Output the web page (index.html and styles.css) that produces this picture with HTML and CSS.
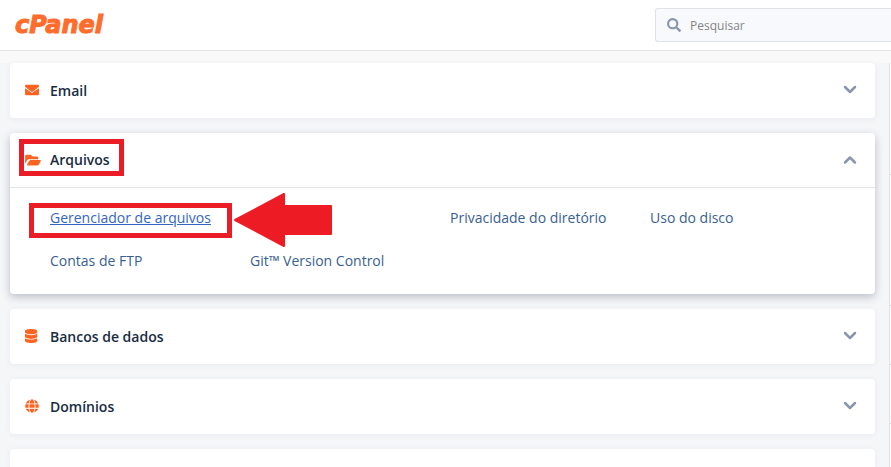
FILE: index.html
```html
<!DOCTYPE html>
<html lang="pt-BR">
<head>
    <meta charset="UTF-8">
    <meta name="viewport" content="width=device-width, initial-scale=1.0">
    <title>cPanel</title>
    <link rel="stylesheet" href="styles.css">
</head>
<body>
    <!--top bar with logo and search-->
    <header class="top-bar">
        <a class="logo" href="#">cPanel</a>
        <div class="search">
            <svg class="search-icon" viewBox="0 0 512 512" aria-hidden="true"><path d="M505 443 405 343c-4-4-10-7-17-7h-16a207 207 0 1 0-36 36v16c0 7 3 13 7 17l100 100c9 9 24 9 34 0l28-28c9-10 9-25 0-34zM208 336a128 128 0 1 1 0-256 128 128 0 0 1 0 256z"/></svg>
            <input type="text" class="search-input" placeholder="Pesquisar" aria-label="Pesquisar">
        </div>
    </header>

    <div class="page">
        <!--feature groups-->
        <main class="groups">
            <section class="card">
                <button class="card-header" aria-expanded="false">
                    <svg class="card-icon" viewBox="0 0 512 512" aria-hidden="true"><path d="M502 191c4-3 10 0 10 5v204c0 27-21 48-48 48H48c-27 0-48-21-48-48V196c0-5 6-8 10-5 22 17 52 40 154 114 21 15 57 48 92 47 35 1 72-32 92-47 102-74 132-97 154-114zM256 320c23 0 56-29 73-41 133-96 143-105 174-129 6-4 9-11 9-19v-19c0-27-21-48-48-48H48c-27 0-48 21-48 48v19c0 8 3 15 9 19 31 24 41 33 174 129 17 12 50 41 73 41z"/></svg>
                    <span class="card-title">Email</span>
                    <svg class="chevron" viewBox="0 0 28 28" aria-hidden="true"><path d="M4 8 14 18 24 8"/></svg>
                </button>
            </section>

            <section class="card card-open">
                <button class="card-header" aria-expanded="true">
                    <svg class="card-icon folder-icon" viewBox="0 0 576 512" aria-hidden="true"><path d="m573 295-72 123c-13 22-42 38-68 38H92c-18 0-29-20-20-36l72-124c13-22 42-40 68-40h341c18 0 29 24 20 39zM152 224h328v-48c0-27-22-48-48-48H272l-64-64H48c-26 0-48 22-48 48v278l69-118c17-30 49-48 83-48z"/></svg>
                    <span class="card-title">Arquivos</span>
                    <svg class="chevron" viewBox="0 0 28 28" aria-hidden="true"><path d="M4 19 14 9 24 19"/></svg>
                    <span class="highlight highlight-title"></span>
                </button>
                <div class="card-body">
                    <a class="feature active" href="#">Gerenciador de arquivos</a>
                    <a class="feature third-column" href="#">Privacidade do diretório</a>
                    <a class="feature" href="#">Uso do disco</a>
                    <a class="feature first-column" href="#">Contas de FTP</a>
                    <a class="feature" href="#">Git™ Version Control</a>
                    <span class="highlight highlight-link"></span>
                    <svg class="arrow" viewBox="0 0 98 54" aria-hidden="true"><path d="M1 27 50 1V13H97V41H50V53Z"/></svg>
                </div>
            </section>

            <section class="card">
                <button class="card-header" aria-expanded="false">
                    <svg class="card-icon" viewBox="0 0 512 512" aria-hidden="true"><path d="M448 73v46c0 40-100 73-224 73S0 159 0 119V73C0 33 100 0 224 0s224 33 224 73zM448 176v103c0 40-100 73-224 73S0 319 0 279V176c48 33 136 48 224 48s176-15 224-48zM448 336v103c0 40-100 73-224 73S0 479 0 439V336c48 33 136 48 224 48s176-15 224-48z"/></svg>
                    <span class="card-title">Bancos de dados</span>
                    <svg class="chevron" viewBox="0 0 28 28" aria-hidden="true"><path d="M4 8 14 18 24 8"/></svg>
                </button>
            </section>

            <section class="card">
                <button class="card-header" aria-expanded="false">
                    <svg class="card-icon" viewBox="0 0 496 512" aria-hidden="true"><path d="M336 160C322 71 288 8 248 8s-74 63-88 152h176zM152 256c0 22 1 44 3 64h186c2-20 3-42 3-64s-1-44-3-64H155c-2 20-3 42-3 64zm325-96A248 248 0 0 0 316 18c25 34 42 85 51 142h110zM180 18A248 248 0 0 0 19 160h110c9-57 26-108 51-142zm307 174H373a710 710 0 0 1 0 128h114a248 248 0 0 0 0-128zM120 256c0-22 1-43 3-64H9a248 248 0 0 0 0 128h114c-2-21-3-42-3-64zm40 96c14 89 48 152 88 152s74-63 88-152H160zm156 142a248 248 0 0 0 161-142H367c-9 57-26 108-51 142zM19 352a248 248 0 0 0 161 142c-25-34-42-85-51-142H19z"/></svg>
                    <span class="card-title">Domínios</span>
                    <svg class="chevron" viewBox="0 0 28 28" aria-hidden="true"><path d="M4 8 14 18 24 8"/></svg>
                </button>
            </section>

            <section class="card card-next"></section>
        </main>

        <!--edge of the information panel-->
        <aside class="side-panel">
            <div class="side-row side-heading"></div>
            <div class="side-row side-tall"></div>
            <div class="side-row"></div>
            <div class="side-row"></div>
        </aside>
    </div>

    <script>
        //toggle a group when its header is clicked
        document.querySelectorAll('.card-header').forEach(header => {
            header.addEventListener('click', () => {
                const body = header.nextElementSibling;
                if (!body) return;
                body.hidden = !body.hidden;
                header.setAttribute('aria-expanded', String(!body.hidden));
            });
        });
    </script>
</body>
</html>
```
FILE: styles.css
```css
/*base*/
* {
    box-sizing: border-box;
}

body {
    margin: 0;
    height: 100vh;
    display: flex;
    flex-direction: column;
    overflow: hidden;
    background-color: #f5f6f8;
    font-family: "Open Sans", "Noto Sans", sans-serif;
    font-size: 14px;
    color: #182c42;
}

/*top bar*/
.top-bar {
    flex: none;
    display: flex;
    align-items: center;
    justify-content: space-between;
    height: 51px;
    padding-left: 15px;
    background-color: #fff;
    border-bottom: 1px solid #e4e5e7;
}

.logo {
    font-family: "DejaVu Sans", sans-serif;
    font-size: 24px;
    font-weight: bold;
    font-style: oblique;
    line-height: 32px;
    color: #ff6c2c;
    -webkit-text-stroke: 1px #ff6c2c;
    text-decoration: none;
}

.search {
    display: flex;
    align-items: center;
    width: 236px;
    height: 34px;
    padding-left: 11px;
    gap: 9px;
    background-color: #f7f9fc;
    border: 1px solid #dfe3e8;
    border-right: none;
    border-radius: 3px 0 0 3px;
}

.search-icon {
    flex: none;
    width: 14px;
    height: 14px;
    fill: #8a96ad;
}

.search-input {
    flex: 1;
    min-width: 0;
    padding: 0;
    border: none;
    outline: none;
    background: transparent;
    font-family: inherit;
    font-size: 12px;
    color: #333;
}

.search-input::placeholder {
    color: #858585;
}

/*page layout*/
.page {
    flex: 1;
    display: flex;
    gap: 14px;
    padding-left: 10px;
    min-height: 0;
    border-top: 12px solid #f9f9fa;
}

.groups {
    flex: 1;
    display: flex;
    flex-direction: column;
    gap: 15px;
}

/*group cards*/
.card {
    flex: none;
    background-color: #fff;
    border-radius: 4px;
    box-shadow: 0 1px 6px rgba(40, 50, 80, 0.06);
}

.card-open {
    box-shadow: 0 3px 8px rgba(40, 45, 75, 0.28);
}

.card-next {
    flex: 1;
    border-radius: 4px 4px 0 0;
}

.card-header {
    position: relative;
    display: flex;
    align-items: center;
    width: 100%;
    height: 55px;
    padding: 0 18px 1px 15px;
    border: none;
    background: none;
    font: inherit;
    color: inherit;
    text-align: left;
    cursor: pointer;
}

.card-open .card-header {
    border-bottom: 1px solid #e3e5e8;
}

.card-icon {
    flex: none;
    width: 14px;
    height: 14px;
    margin-right: 11px;
    fill: #ff6321;
}

.folder-icon {
    width: 16px;
    margin-right: 9px;
}

.card-title {
    flex: 1;
    font-weight: 600;
}

.chevron {
    width: 14px;
    height: 14px;
    fill: none;
    stroke: #8b95ab;
    stroke-width: 5;
    stroke-linecap: round;
    stroke-linejoin: round;
}

/*feature links*/
.card-body {
    position: relative;
    display: grid;
    grid-template-columns: repeat(auto-fill, 200px);
    row-gap: 23px;
    padding: 20px 0 23px 40px;
}

.card-body[hidden] {
    display: none;
}

.feature {
    line-height: 20px;
    color: #3a5f92;
    text-decoration: none;
}

.feature:hover,
.feature.active {
    color: #3465c4;
    text-decoration: underline;
}

.first-column {
    grid-column: 1;
}

.third-column {
    grid-column: 3;
}

/*red marks over the card*/
.highlight {
    position: absolute;
    border: 5px solid #ea1c26;
    pointer-events: none;
}

.highlight-title {
    top: 6px;
    left: 9px;
    width: 105px;
    height: 37px;
}

.highlight-link {
    top: 15px;
    left: 19px;
    width: 203px;
    height: 35px;
}

.arrow {
    position: absolute;
    top: 5px;
    left: 224px;
    width: 98px;
    height: 54px;
    fill: #ed1c24;
    stroke: #ed1c24;
    stroke-width: 2;
    stroke-linejoin: round;
    pointer-events: none;
}

/*side panel*/
.side-panel {
    flex: none;
    width: 2px;
    background-color: #fafafa;
    border-left: 1px solid #e2e3e5;
}

.side-row {
    height: 59px;
    border-bottom: 1px solid #d8dadd;
}

.side-heading {
    height: 112px;
}

.side-tall {
    height: 131px;
}
```
